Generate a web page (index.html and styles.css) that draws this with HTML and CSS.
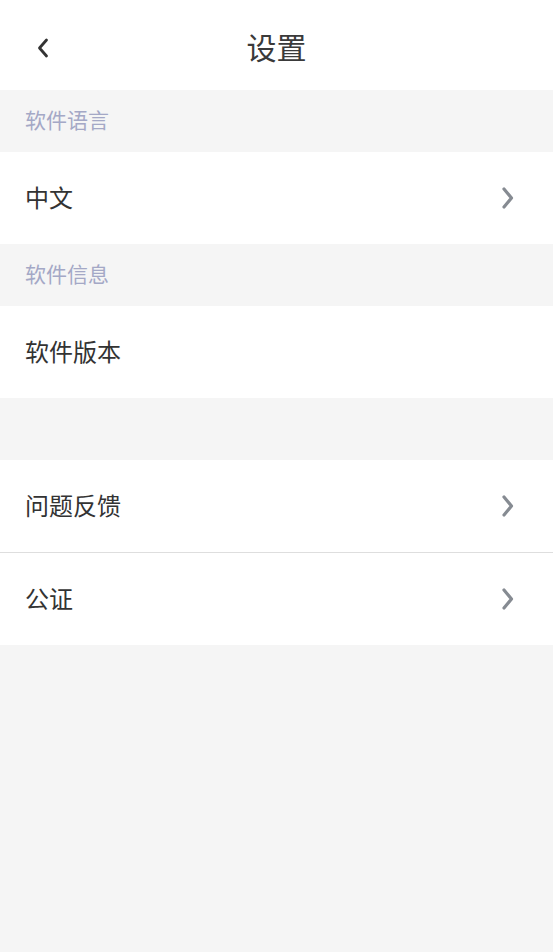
FILE: index.html
```html
<!DOCTYPE html>
<html lang="zh-CN">
<head>
<meta charset="utf-8">
<title>设置</title>
<link rel="stylesheet" href="styles.css">
</head>
<body>
<div class="page">
  <header class="topbar">
    <button class="back" aria-label="返回">
      <svg width="14" height="20" viewBox="0 0 14 20"><path d="M10.5 2 L3.5 10 L10.5 18" fill="none" stroke="#333" stroke-width="2.8" stroke-linecap="round" stroke-linejoin="round"/></svg>
    </button>
    <h1 class="title">设置</h1>
  </header>

  <div class="section">软件语言</div>
  <div class="row">
    <span class="label">中文</span>
    <svg class="chev" width="14" height="22" viewBox="0 0 14 22"><path d="M3 2 L10.5 11 L3 20" fill="none" stroke="#868b92" stroke-width="3.2" stroke-linecap="round" stroke-linejoin="round"/></svg>
  </div>

  <div class="section">软件信息</div>
  <div class="row">
    <span class="label">软件版本</span>
  </div>

  <div class="section"></div>
  <div class="row row-divided">
    <span class="label">问题反馈</span>
    <svg class="chev" width="14" height="22" viewBox="0 0 14 22"><path d="M3 2 L10.5 11 L3 20" fill="none" stroke="#868b92" stroke-width="3.2" stroke-linecap="round" stroke-linejoin="round"/></svg>
  </div>
  <div class="row">
    <span class="label">公证</span>
    <svg class="chev" width="14" height="22" viewBox="0 0 14 22"><path d="M3 2 L10.5 11 L3 20" fill="none" stroke="#868b92" stroke-width="3.2" stroke-linecap="round" stroke-linejoin="round"/></svg>
  </div>
</div>
</body>
</html>
```
FILE: styles.css
```css
html, body {
  margin: 0;
  padding: 0;
  background: #f5f5f5;
}
body {
  font-family: "Noto Sans CJK SC", "Noto Sans", sans-serif;
  width: 553px;
  min-height: 952px;
}
.page {
  display: flex;
  flex-direction: column;
}
.topbar {
  height: 90px;
  background: #fff;
  display: grid;
  grid-template-columns: 1fr auto 1fr;
  align-items: center;
}
.back {
  justify-self: start;
  margin-left: 36px;
  padding: 0;
  border: 0;
  background: none;
  display: flex;
  margin-top: 6px;
}
.title {
  grid-column: 2;
  margin: 0;
  font-size: 30px;
  font-weight: 400;
  color: #3a3a3a;
  line-height: 1;
  margin-top: 2px;
}
.section {
  height: 62px;
  box-sizing: border-box;
  padding-left: 25px;
  padding-bottom: 3px;
  display: flex;
  align-items: center;
  font-size: 21px;
  line-height: 1;
  color: #a4a8c6;
  background: #f5f5f5;
}
.row {
  height: 92px;
  background: #fff;
  display: flex;
  align-items: center;
  justify-content: space-between;
  padding: 0 38px 0 25px;
}
.row-divided {
  border-bottom: 1px solid #dedede;
}
.label {
  font-size: 24px;
  line-height: 1;
  color: #333;
  margin-bottom: 3px;
}
.chev {
  display: block;
}
```
